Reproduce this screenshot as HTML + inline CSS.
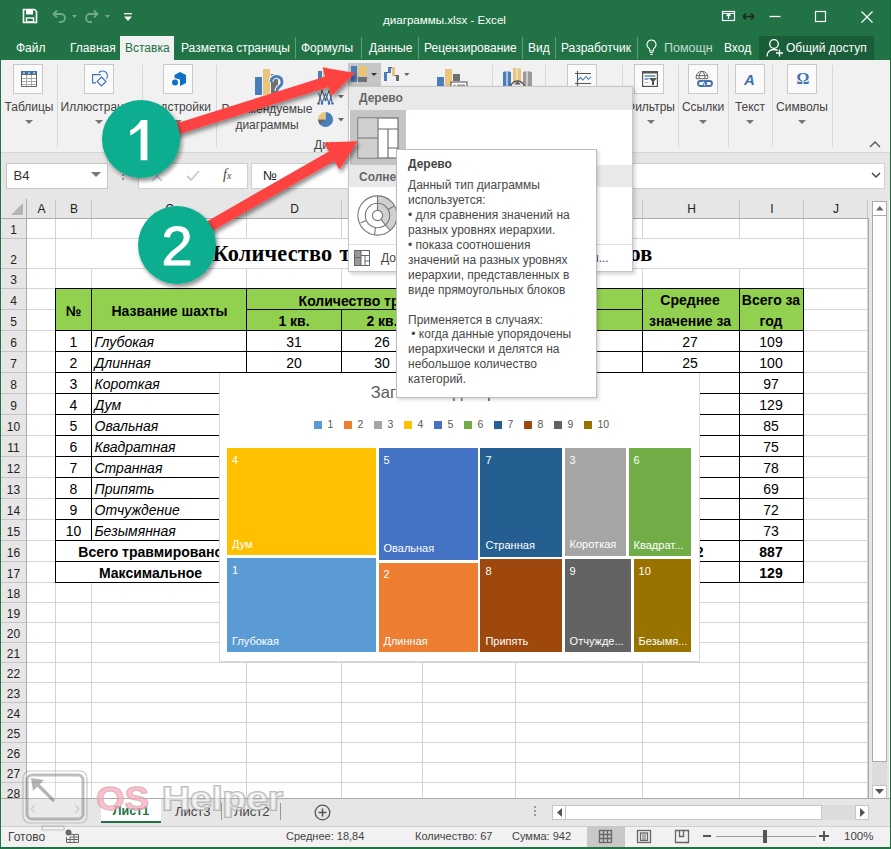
<!DOCTYPE html><html><head><meta charset="utf-8"><style>
*{margin:0;padding:0;box-sizing:border-box}
html,body{width:891px;height:849px;overflow:hidden;background:#fff}
body{position:relative;font-family:"Liberation Sans",sans-serif;color:#000}
.a{position:absolute}
.t{position:absolute;white-space:nowrap;line-height:1}
.ln{position:absolute;background:#d4d4d4}
</style></head><body><div class="a" style="left:0;top:0;width:891px;height:60px;background:#217346"></div>
<svg class="a" style="left:22px;top:8px" width="16" height="16" viewBox="0 0 16 16"><path d="M1.5 1.5h11l2 2v11h-13z" fill="none" stroke="#fff" stroke-width="1.6"/><rect x="4" y="2" width="7" height="4.5" fill="#fff"/><rect x="4.5" y="10" width="7" height="4" fill="none" stroke="#fff" stroke-width="1.4"/></svg>
<svg class="a" style="left:50px;top:8px" width="70" height="16" viewBox="0 0 70 16"><g fill="none" stroke="#6fa98a" stroke-width="1.8"><path d="M4 6h7a4 4 0 0 1 0 8h-2"/><path d="M7 2.5L3.5 6L7 9.5"/><path d="M47 6h-7a4 4 0 0 0 0 8h2"/><path d="M44 2.5L47.5 6L44 9.5"/></g><path d="M22 7h5l-2.5 3z M55 7h5l-2.5 3z" fill="#6fa98a"/></svg>
<svg class="a" style="left:124px;top:13px" width="8" height="9" viewBox="0 0 8 9"><rect x="0" y="0" width="8" height="1.3" fill="#fff"/><path d="M0 3.5h8L4 8z" fill="#fff"/></svg>
<div class="t" style="left:383px;top:14.1px;font-size:11.6px;color:#fff">диаграммы.xlsx - Excel</div>
<svg class="a" style="left:720px;top:9px" width="160" height="16" viewBox="0 0 160 16"><g fill="none" stroke="#fff" stroke-width="1.2"><rect x="2.5" y="2.5" width="12" height="9"/><path d="M8.5 10V5M6.5 7l2-2 2 2M2.5 4.5h12"/><path d="M49.5 7.5h11" stroke-width="1.3"/><rect x="95.5" y="2.5" width="10" height="10"/><path d="M141.5 2.5l11 11M152.5 2.5l-11 11" stroke-width="1.3"/></g><path d="M23 7.5h11M23 7.5l3-3M23 7.5l3 3M34 7.5l-3-3M34 7.5l-3 3" stroke="#222" stroke-width="1.5" fill="none"/></svg>
<div class="a" style="left:120px;top:36px;width:54px;height:25px;background:#f1f1f1"></div>
<div class="t" style="left:16px;top:42px;font-size:12px;color:#fff;width:29px;text-align:justify;text-align-last:justify">Файл</div>
<div class="t" style="left:70px;top:42px;font-size:12px;color:#fff;width:42px;text-align:justify;text-align-last:justify">Главная</div>
<div class="t" style="left:125px;top:42px;font-size:12px;color:#217346;width:44px;text-align:justify;text-align-last:justify">Вставка</div>
<div class="t" style="left:181px;top:42px;font-size:12px;color:#fff;width:106px;text-align:justify;text-align-last:justify">Разметка страницы</div>
<div class="t" style="left:301px;top:42px;font-size:12px;color:#fff;width:53px;text-align:justify;text-align-last:justify">Формулы</div>
<div class="t" style="left:369px;top:42px;font-size:12px;color:#fff;width:42px;text-align:justify;text-align-last:justify">Данные</div>
<div class="t" style="left:424px;top:42px;font-size:12px;color:#fff;width:91px;text-align:justify;text-align-last:justify">Рецензирование</div>
<div class="t" style="left:528px;top:42px;font-size:12px;color:#fff;width:20px;text-align:justify;text-align-last:justify">Вид</div>
<div class="t" style="left:561px;top:42px;font-size:12px;color:#fff;width:70px;text-align:justify;text-align-last:justify">Разработчик</div>
<div class="a" style="left:295px;top:37px;width:1px;height:22px;background:#5e9c7a"></div>
<div class="a" style="left:361px;top:37px;width:1px;height:22px;background:#5e9c7a"></div>
<div class="a" style="left:418px;top:37px;width:1px;height:22px;background:#5e9c7a"></div>
<div class="a" style="left:522px;top:37px;width:1px;height:22px;background:#5e9c7a"></div>
<div class="a" style="left:555px;top:37px;width:1px;height:22px;background:#5e9c7a"></div>
<div class="a" style="left:637px;top:37px;width:1px;height:22px;background:#5e9c7a"></div>
<svg class="a" style="left:646px;top:39px" width="11" height="17" viewBox="0 0 11 17"><path d="M5.5 1a4.5 4.5 0 0 0-2.7 8.1c.6.5.9 1.2.9 1.9V12h3.6v-1c0-.7.3-1.4.9-1.9A4.5 4.5 0 0 0 5.5 1z" fill="none" stroke="#fff" stroke-width="1.1"/><path d="M3.8 13.5h3.4M4.3 15.5h2.4" stroke="#fff" stroke-width="1.1"/></svg>
<div class="t" style="left:664px;top:42px;font-size:12.5px;color:#c5dccf">Помощн</div>
<div class="t" style="left:724px;top:42px;font-size:12px;color:#fff">Вход</div>
<div class="a" style="left:759px;top:36px;width:115px;height:24px;background:#1a5e39"></div>
<svg class="a" style="left:766px;top:38px" width="18" height="20" viewBox="0 0 18 20"><circle cx="8" cy="6" r="4.3" fill="none" stroke="#fff" stroke-width="1.3"/><path d="M1 18.5c0-4.5 3-7 7-7 1.5 0 2.6.3 3.5.9" fill="none" stroke="#fff" stroke-width="1.3"/><path d="M13.5 11.5v7M10 15h7" stroke="#fff" stroke-width="1.3"/></svg>
<div class="t" style="left:786px;top:42px;font-size:12px;color:#fff">Общий доступ</div>
<div class="a" style="left:1px;top:60px;width:889px;height:92px;background:#f1f1f1"></div>
<div class="a" style="left:1px;top:152px;width:889px;height:1px;background:#d5d5d5"></div>
<div class="a" style="left:13px;top:64px;width:30px;height:30px;background:#fafafa;border:1px solid #c9c9c9"></div>
<div class="a" style="left:84px;top:64px;width:30px;height:30px;background:#fafafa;border:1px solid #c9c9c9"></div>
<div class="a" style="left:163px;top:64px;width:30px;height:30px;background:#fafafa;border:1px solid #c9c9c9"></div>
<div class="a" style="left:567px;top:64px;width:30px;height:30px;background:#fafafa;border:1px solid #c9c9c9"></div>
<div class="a" style="left:634px;top:64px;width:30px;height:30px;background:#fafafa;border:1px solid #c9c9c9"></div>
<div class="a" style="left:688px;top:64px;width:30px;height:30px;background:#fafafa;border:1px solid #c9c9c9"></div>
<div class="a" style="left:735px;top:64px;width:30px;height:30px;background:#fafafa;border:1px solid #c9c9c9"></div>
<div class="a" style="left:787px;top:64px;width:30px;height:30px;background:#fafafa;border:1px solid #c9c9c9"></div>
<div class="a" style="left:57px;top:65px;width:1px;height:82px;background:#d8d8d8"></div>
<div class="a" style="left:142px;top:65px;width:1px;height:82px;background:#d8d8d8"></div>
<div class="a" style="left:216px;top:65px;width:1px;height:82px;background:#d8d8d8"></div>
<div class="a" style="left:492px;top:65px;width:1px;height:82px;background:#d8d8d8"></div>
<div class="a" style="left:545px;top:65px;width:1px;height:82px;background:#d8d8d8"></div>
<div class="a" style="left:622px;top:65px;width:1px;height:82px;background:#d8d8d8"></div>
<div class="a" style="left:678px;top:65px;width:1px;height:82px;background:#d8d8d8"></div>
<div class="a" style="left:728px;top:65px;width:1px;height:82px;background:#d8d8d8"></div>
<div class="a" style="left:772px;top:65px;width:1px;height:82px;background:#d8d8d8"></div>
<div class="a" style="left:832px;top:65px;width:1px;height:82px;background:#d8d8d8"></div>
<div class="t" style="left:-31px;width:120px;text-align:center;top:101px;font-size:12px;color:#444">Таблицы</div>
<svg class="a" style="left:25px;top:120px" width="8" height="5"><path d="M0 0h8L4 4z" fill="#777"/></svg>
<div class="t" style="left:39px;width:120px;text-align:center;top:101px;font-size:12px;color:#444">Иллюстрации</div>
<svg class="a" style="left:95px;top:120px" width="8" height="5"><path d="M0 0h8L4 4z" fill="#777"/></svg>
<div class="t" style="left:118px;width:120px;text-align:center;top:101px;font-size:12px;color:#444">Надстройки</div>
<svg class="a" style="left:174px;top:120px" width="8" height="5"><path d="M0 0h8L4 4z" fill="#777"/></svg>
<div class="t" style="left:590.5px;width:120px;text-align:center;top:101px;font-size:12px;color:#444">Фильтры</div>
<svg class="a" style="left:646.5px;top:120px" width="8" height="5"><path d="M0 0h8L4 4z" fill="#777"/></svg>
<div class="t" style="left:643px;width:120px;text-align:center;top:101px;font-size:12px;color:#444">Ссылки</div>
<svg class="a" style="left:699px;top:120px" width="8" height="5"><path d="M0 0h8L4 4z" fill="#777"/></svg>
<div class="t" style="left:690px;width:120px;text-align:center;top:101px;font-size:12px;color:#444">Текст</div>
<svg class="a" style="left:746px;top:120px" width="8" height="5"><path d="M0 0h8L4 4z" fill="#777"/></svg>
<div class="t" style="left:742px;width:120px;text-align:center;top:101px;font-size:12px;color:#444">Символы</div>
<svg class="a" style="left:798px;top:120px" width="8" height="5"><path d="M0 0h8L4 4z" fill="#777"/></svg>
<div class="t" style="left:207px;width:120px;text-align:center;top:102.8px;font-size:12px;color:#444">Рекомендуемые</div>
<div class="t" style="left:207px;width:120px;text-align:center;top:118.5px;font-size:12px;color:#444">диаграммы</div>
<div class="t" style="left:314px;top:139.3px;font-size:12px;color:#444">Диаграммы</div>
<svg class="a" style="left:869px;top:141px" width="12" height="7"><path d="M1 6l5-5 5 5" stroke="#555" stroke-width="1.4" fill="none"/></svg>
<svg class="a" style="left:21px;top:71px" width="16" height="16" viewBox="0 0 16 16"><rect x="0" y="0" width="16" height="4" fill="#3f72af"/><rect x="0.5" y="3.5" width="15" height="12" fill="#fff" stroke="#666"/><path d="M5.5 4v11M10.5 4v11M1 7.5h14M1 10.5h14M1 13.5h14" stroke="#aaa"/><path d="M2 2h2M7 2h2M12 2h2" stroke="#fff"/></svg>
<svg class="a" style="left:90px;top:70px" width="20" height="18" viewBox="0 0 20 18"><g fill="none" stroke="#3c72b4" stroke-width="1.1"><path d="M10.8 4.6H2.6v8.3H6"/><path d="M11.5 7l4.5 4.5-4.5 4.5-4.5-4.5z"/><path d="M8.8 2.8A4.8 4.8 0 1 1 16.4 8.9"/></g></svg>
<svg class="a" style="left:171px;top:71px" width="17" height="16" viewBox="0 0 17 16"><path d="M9 1l6 3v8l-6 3V8.5L3.5 7V4z" fill="#0f6fc6"/><circle cx="4" cy="11.5" r="3" fill="#0f6fc6"/></svg>
<svg class="a" style="left:254px;top:68px" width="30" height="28" viewBox="0 0 30 28"><rect x="1" y="9" width="7" height="18" fill="#4a7ebb"/><rect x="9" y="1" width="7" height="26" fill="#e8c57a"/><rect x="17" y="6" width="7" height="21" fill="#707070"/><path d="M17 14a5.5 5.5 0 1 1 8.5 4.5c-1.8 1.3-2.5 2-2.5 4.5" fill="none" stroke="#f1f1f1" stroke-width="5"/><path d="M17 14a5.5 5.5 0 1 1 8.5 4.5c-1.8 1.3-2.5 2-2.5 4.5" fill="none" stroke="#4a7ebb" stroke-width="2.8"/></svg>
<svg class="a" style="left:317px;top:67px" width="18" height="14" viewBox="0 0 18 14"><rect x="1" y="4" width="4" height="10" fill="#4a7ebb"/><rect x="6" y="0" width="4" height="14" fill="#e8c57a"/><rect x="11" y="6" width="4" height="8" fill="#707070"/></svg>
<svg class="a" style="left:317px;top:89px" width="18" height="16" viewBox="0 0 18 16"><path d="M1.5 14.5L5 1.5L8.5 11L12 1.5L15.5 14.5" fill="none" stroke="#555" stroke-width="1.1"/><path d="M1.5 4L5 14.5L8.5 4.5L12 14.5L15.5 3" fill="none" stroke="#3f72af" stroke-width="1.2"/><circle cx="1.5" cy="14.5" r="1.2" fill="#555"/><circle cx="8.5" cy="11" r="1.1" fill="#555"/><circle cx="15.5" cy="14.5" r="1.2" fill="#3f72af"/><circle cx="5" cy="14.5" r="1.2" fill="#3f72af"/><circle cx="12" cy="14.5" r="1.2" fill="#3f72af"/></svg>
<svg class="a" style="left:338px;top:95px" width="6" height="4"><path d="M0 0h6L3 3.5z" fill="#666"/></svg>
<svg class="a" style="left:317px;top:111px" width="17" height="17" viewBox="0 0 17 17"><path d="M8.5 1A7.5 7.5 0 1 1 2 12.2L8.5 8.5z" fill="#4a7ebb"/><path d="M8.5 1V8.5H1A7.5 7.5 0 0 1 8.5 1z" fill="#e8c57a"/><path d="M1 8.5H8.5L2.6 13.2A7.5 7.5 0 0 1 1 8.5z" fill="#666"/></svg>
<svg class="a" style="left:338px;top:118px" width="6" height="4"><path d="M0 0h6L3 3.5z" fill="#666"/></svg>
<div class="a" style="left:348px;top:63px;width:33px;height:23px;background:#c6c6c6"></div>
<svg class="a" style="left:350px;top:65px" width="30" height="18" viewBox="0 0 30 18"><rect x="1" y="1" width="6" height="16" fill="#4a7ebb"/><rect x="8" y="1" width="9" height="10" fill="#e8c57a"/><rect x="8" y="12" width="9" height="5" fill="#707070"/><path d="M21 8h6l-3 3z" fill="#333"/></svg>
<svg class="a" style="left:383px;top:66px" width="28" height="16" viewBox="0 0 28 16"><rect x="1" y="6" width="3" height="9" fill="#4a7ebb"/><rect x="5" y="1" width="3" height="6" fill="#4a7ebb"/><rect x="9" y="1" width="3" height="9" fill="#e8c57a"/><rect x="13" y="9" width="3" height="6" fill="#6a6a6a"/><path d="M4 6.5h1M8 1.5h1M12 9.5h1" stroke="#444" stroke-width="1"/><path d="M21 7h5.5l-2.75 3z" fill="#666"/></svg>
<svg class="a" style="left:436px;top:68px" width="32" height="20" viewBox="0 0 32 20"><rect x="1" y="9" width="7" height="11" fill="#4a7ebb"/><rect x="9" y="1" width="7" height="19" fill="#e8c57a"/><rect x="17" y="6" width="7" height="7" fill="#707070"/><rect x="15" y="14" width="16" height="7" fill="#fff" stroke="#666" stroke-width="1.2"/><rect x="17.5" y="16.5" width="2" height="3" fill="#999"/><rect x="21" y="16.5" width="8" height="3" fill="#999"/></svg>
<svg class="a" style="left:502px;top:67px" width="32" height="20" viewBox="0 0 32 20"><path d="M1 5l4-1 4 1v15H1z" fill="#4a7ebb"/><path d="M11 1l4 0 4 1v18h-8z" fill="#e8c57a"/><path d="M21 5l4-1 5 1v15h-9z" fill="#9a9a9a"/><path d="M5 4v16M15 1v19M25 4v16" stroke="#f1f1f1" stroke-width="1.2"/><circle cx="15.5" cy="21" r="7" fill="#f1f1f1" stroke="#555" stroke-width="1.3"/><path d="M12 17.5l3.5-3 3.5 3z" fill="#555"/></svg>
<svg class="a" style="left:574px;top:70px" width="18" height="17" viewBox="0 0 18 17"><path d="M3.5 1V17M1 3.5H17M1 13.5H17" stroke="#555" stroke-width="1.1"/><path d="M4 10L6.5 7.5L9 10L12 6.5L14.5 9.5L17 6.5" fill="none" stroke="#4a7ebb" stroke-width="1.1"/></svg>
<svg class="a" style="left:642px;top:71px" width="16" height="16" viewBox="0 0 16 16"><rect x="0.6" y="0.6" width="14.8" height="14.8" fill="#fff" stroke="#555" stroke-width="1.2"/><rect x="0" y="0" width="16" height="2.5" fill="#555"/><path d="M2.5 5h11" stroke="#3f72af" stroke-width="1.3"/><path d="M2.5 8h4" stroke="#3f72af" stroke-width="1.3"/><path d="M2.5 11.5h4" stroke="#9bb8d8" stroke-width="1"/><path d="M7 7h8l-3 3.5V14h-2v-3.5z" fill="#555"/></svg>
<svg class="a" style="left:695px;top:70px" width="20" height="19" viewBox="0 0 20 19"><g fill="none" stroke="#666" stroke-width="1"><path d="M1.3 8.7A5.9 5.9 0 1 1 12.7 8.7Z"/><path d="M1.5 5.6H12.5M4.2 8.7V5.6Q5 2 7 1.3Q9 2 9.8 5.6V8.7"/></g><rect x="3" y="11" width="8" height="5" rx="2.5" fill="none" stroke="#3f72af" stroke-width="1.9"/><rect x="9" y="11" width="8" height="5" rx="2.5" fill="none" stroke="#3f72af" stroke-width="1.9"/><path d="M8.2 11.2L10.2 15.8" stroke="#fafafa" stroke-width="0.9"/></svg>
<div class="t" style="left:744px;top:72px;font-size:15px;font-weight:bold;font-style:italic;color:#3f72af">A</div>
<div class="t" style="left:796.5px;top:71px;font-family:'Liberation Serif';font-size:16px;font-weight:bold;color:#3f72af">&#937;</div>
<div class="a" style="left:1px;top:153px;width:889px;height:46px;background:#e6e6e6"></div>
<div class="a" style="left:6px;top:163px;width:102px;height:26px;background:#fff;border:1px solid #c6c6c6"></div>
<div class="t" style="left:13.5px;top:169px;font-size:13px;color:#333">B4</div>
<svg class="a" style="left:91px;top:172px" width="10" height="6"><path d="M0 0h10L5 5z" fill="#777"/></svg>
<div class="a" style="left:122px;top:170px;width:2px;height:2px;background:#999;box-shadow:0 4px 0 #999,0 8px 0 #999"></div>
<div class="a" style="left:138px;top:163px;width:110px;height:26px;background:#fff;border:1px solid #d0d0d0"></div>
<svg class="a" style="left:150px;top:168px" width="90" height="16" viewBox="0 0 90 16"><path d="M2 3l10 10M12 3L2 13" stroke="#c8c8c8" stroke-width="1.5"/><path d="M37 8l4 4 8-9" stroke="#c8c8c8" stroke-width="1.8" fill="none"/></svg>
<div class="t" style="left:223px;top:168px;font-family:'Liberation Serif';font-style:italic;font-size:14px;color:#444">f<span style="font-size:10px">x</span></div>
<div class="a" style="left:251px;top:163px;width:634px;height:26px;background:#fff;border:1px solid #d0d0d0"></div>
<div class="t" style="left:263px;top:169px;font-size:13px;color:#222">№</div>
<svg class="a" style="left:871px;top:172px" width="10" height="7"><path d="M1 1l4 4 4-4" stroke="#444" stroke-width="1.5" fill="none"/></svg>
<div class="a" style="left:1px;top:199px;width:867px;height:19px;background:#e6e6e6"></div>
<div class="a" style="left:1px;top:218px;width:26px;height:581px;background:#e6e6e6"></div>
<svg class="a" style="left:11px;top:203px" width="12" height="12"><path d="M12 0V12H0z" fill="#b4b4b4"/></svg>
<div class="a" style="left:55px;top:200px;width:1px;height:18px;background:#c4c4c4"></div>
<div class="t" style="left:27px;width:29px;text-align:center;top:203px;font-size:12px;color:#222">A</div>
<div class="a" style="left:91px;top:200px;width:1px;height:18px;background:#c4c4c4"></div>
<div class="t" style="left:56px;width:36px;text-align:center;top:203px;font-size:12px;color:#222">B</div>
<div class="a" style="left:246px;top:200px;width:1px;height:18px;background:#c4c4c4"></div>
<div class="t" style="left:92px;width:155px;text-align:center;top:203px;font-size:12px;color:#222">C</div>
<div class="a" style="left:341px;top:200px;width:1px;height:18px;background:#c4c4c4"></div>
<div class="t" style="left:247px;width:95px;text-align:center;top:203px;font-size:12px;color:#222">D</div>
<div class="a" style="left:422px;top:200px;width:1px;height:18px;background:#c4c4c4"></div>
<div class="t" style="left:342px;width:81px;text-align:center;top:203px;font-size:12px;color:#222">E</div>
<div class="a" style="left:515px;top:200px;width:1px;height:18px;background:#c4c4c4"></div>
<div class="t" style="left:423px;width:93px;text-align:center;top:203px;font-size:12px;color:#222">F</div>
<div class="a" style="left:642px;top:200px;width:1px;height:18px;background:#c4c4c4"></div>
<div class="t" style="left:516px;width:127px;text-align:center;top:203px;font-size:12px;color:#222">G</div>
<div class="a" style="left:739px;top:200px;width:1px;height:18px;background:#c4c4c4"></div>
<div class="t" style="left:643px;width:97px;text-align:center;top:203px;font-size:12px;color:#222">H</div>
<div class="a" style="left:803px;top:200px;width:1px;height:18px;background:#c4c4c4"></div>
<div class="t" style="left:740px;width:64px;text-align:center;top:203px;font-size:12px;color:#222">I</div>
<div class="a" style="left:867px;top:200px;width:1px;height:18px;background:#c4c4c4"></div>
<div class="t" style="left:804px;width:64px;text-align:center;top:203px;font-size:12px;color:#222">J</div>
<div class="a" style="left:1px;top:218px;width:867px;height:1px;background:#ababab"></div>
<div class="a" style="left:26px;top:199px;width:1px;height:600px;background:#ababab"></div>
<div class="a" style="left:1px;top:238px;width:25px;height:1px;background:#c4c4c4"></div>
<div class="t" style="left:1px;width:25px;text-align:center;top:224px;font-size:12px;color:#222">1</div>
<div class="a" style="left:1px;top:268px;width:25px;height:1px;background:#c4c4c4"></div>
<div class="t" style="left:1px;width:25px;text-align:center;top:254px;font-size:12px;color:#222">2</div>
<div class="a" style="left:1px;top:288px;width:25px;height:1px;background:#c4c4c4"></div>
<div class="t" style="left:1px;width:25px;text-align:center;top:274px;font-size:12px;color:#222">3</div>
<div class="a" style="left:1px;top:309px;width:25px;height:1px;background:#c4c4c4"></div>
<div class="t" style="left:1px;width:25px;text-align:center;top:295px;font-size:12px;color:#222">4</div>
<div class="a" style="left:1px;top:330px;width:25px;height:1px;background:#c4c4c4"></div>
<div class="t" style="left:1px;width:25px;text-align:center;top:316px;font-size:12px;color:#222">5</div>
<div class="a" style="left:1px;top:351px;width:25px;height:1px;background:#c4c4c4"></div>
<div class="t" style="left:1px;width:25px;text-align:center;top:337px;font-size:12px;color:#222">6</div>
<div class="a" style="left:1px;top:372px;width:25px;height:1px;background:#c4c4c4"></div>
<div class="t" style="left:1px;width:25px;text-align:center;top:358px;font-size:12px;color:#222">7</div>
<div class="a" style="left:1px;top:393px;width:25px;height:1px;background:#c4c4c4"></div>
<div class="t" style="left:1px;width:25px;text-align:center;top:379px;font-size:12px;color:#222">8</div>
<div class="a" style="left:1px;top:414px;width:25px;height:1px;background:#c4c4c4"></div>
<div class="t" style="left:1px;width:25px;text-align:center;top:400px;font-size:12px;color:#222">9</div>
<div class="a" style="left:1px;top:435px;width:25px;height:1px;background:#c4c4c4"></div>
<div class="t" style="left:1px;width:25px;text-align:center;top:421px;font-size:12px;color:#222">10</div>
<div class="a" style="left:1px;top:456px;width:25px;height:1px;background:#c4c4c4"></div>
<div class="t" style="left:1px;width:25px;text-align:center;top:442px;font-size:12px;color:#222">11</div>
<div class="a" style="left:1px;top:477px;width:25px;height:1px;background:#c4c4c4"></div>
<div class="t" style="left:1px;width:25px;text-align:center;top:463px;font-size:12px;color:#222">12</div>
<div class="a" style="left:1px;top:498px;width:25px;height:1px;background:#c4c4c4"></div>
<div class="t" style="left:1px;width:25px;text-align:center;top:484px;font-size:12px;color:#222">13</div>
<div class="a" style="left:1px;top:519px;width:25px;height:1px;background:#c4c4c4"></div>
<div class="t" style="left:1px;width:25px;text-align:center;top:505px;font-size:12px;color:#222">14</div>
<div class="a" style="left:1px;top:540px;width:25px;height:1px;background:#c4c4c4"></div>
<div class="t" style="left:1px;width:25px;text-align:center;top:526px;font-size:12px;color:#222">15</div>
<div class="a" style="left:1px;top:561px;width:25px;height:1px;background:#c4c4c4"></div>
<div class="t" style="left:1px;width:25px;text-align:center;top:547px;font-size:12px;color:#222">16</div>
<div class="a" style="left:1px;top:582px;width:25px;height:1px;background:#c4c4c4"></div>
<div class="t" style="left:1px;width:25px;text-align:center;top:568px;font-size:12px;color:#222">17</div>
<div class="a" style="left:1px;top:602px;width:25px;height:1px;background:#c4c4c4"></div>
<div class="t" style="left:1px;width:25px;text-align:center;top:588px;font-size:12px;color:#222">18</div>
<div class="a" style="left:1px;top:622px;width:25px;height:1px;background:#c4c4c4"></div>
<div class="t" style="left:1px;width:25px;text-align:center;top:608px;font-size:12px;color:#222">19</div>
<div class="a" style="left:1px;top:642px;width:25px;height:1px;background:#c4c4c4"></div>
<div class="t" style="left:1px;width:25px;text-align:center;top:628px;font-size:12px;color:#222">20</div>
<div class="a" style="left:1px;top:662px;width:25px;height:1px;background:#c4c4c4"></div>
<div class="t" style="left:1px;width:25px;text-align:center;top:648px;font-size:12px;color:#222">21</div>
<div class="a" style="left:1px;top:682px;width:25px;height:1px;background:#c4c4c4"></div>
<div class="t" style="left:1px;width:25px;text-align:center;top:668px;font-size:12px;color:#222">22</div>
<div class="a" style="left:1px;top:702px;width:25px;height:1px;background:#c4c4c4"></div>
<div class="t" style="left:1px;width:25px;text-align:center;top:688px;font-size:12px;color:#222">23</div>
<div class="a" style="left:1px;top:722px;width:25px;height:1px;background:#c4c4c4"></div>
<div class="t" style="left:1px;width:25px;text-align:center;top:708px;font-size:12px;color:#222">24</div>
<div class="a" style="left:1px;top:742px;width:25px;height:1px;background:#c4c4c4"></div>
<div class="t" style="left:1px;width:25px;text-align:center;top:728px;font-size:12px;color:#222">25</div>
<div class="a" style="left:1px;top:762px;width:25px;height:1px;background:#c4c4c4"></div>
<div class="t" style="left:1px;width:25px;text-align:center;top:748px;font-size:12px;color:#222">26</div>
<div class="a" style="left:1px;top:782px;width:25px;height:1px;background:#c4c4c4"></div>
<div class="t" style="left:1px;width:25px;text-align:center;top:768px;font-size:12px;color:#222">27</div>
<div class="a" style="left:1px;top:802px;width:25px;height:1px;background:#c4c4c4"></div>
<div class="t" style="left:1px;width:25px;text-align:center;top:788px;font-size:12px;color:#222">28</div>
<div class="ln" style="left:55px;top:219px;width:1px;height:580px"></div>
<div class="ln" style="left:91px;top:219px;width:1px;height:19px"></div>
<div class="ln" style="left:91px;top:269px;width:1px;height:530px"></div>
<div class="ln" style="left:246px;top:219px;width:1px;height:19px"></div>
<div class="ln" style="left:246px;top:269px;width:1px;height:530px"></div>
<div class="ln" style="left:341px;top:219px;width:1px;height:19px"></div>
<div class="ln" style="left:341px;top:269px;width:1px;height:530px"></div>
<div class="ln" style="left:422px;top:219px;width:1px;height:19px"></div>
<div class="ln" style="left:422px;top:269px;width:1px;height:530px"></div>
<div class="ln" style="left:515px;top:219px;width:1px;height:19px"></div>
<div class="ln" style="left:515px;top:269px;width:1px;height:530px"></div>
<div class="ln" style="left:642px;top:219px;width:1px;height:19px"></div>
<div class="ln" style="left:642px;top:269px;width:1px;height:530px"></div>
<div class="ln" style="left:739px;top:219px;width:1px;height:19px"></div>
<div class="ln" style="left:739px;top:269px;width:1px;height:530px"></div>
<div class="ln" style="left:803px;top:219px;width:1px;height:580px"></div>
<div class="ln" style="left:867px;top:219px;width:1px;height:580px"></div>
<div class="ln" style="left:27px;top:238px;width:840px;height:1px"></div>
<div class="ln" style="left:27px;top:268px;width:840px;height:1px"></div>
<div class="ln" style="left:27px;top:288px;width:840px;height:1px"></div>
<div class="ln" style="left:27px;top:309px;width:840px;height:1px"></div>
<div class="ln" style="left:27px;top:330px;width:840px;height:1px"></div>
<div class="ln" style="left:27px;top:351px;width:840px;height:1px"></div>
<div class="ln" style="left:27px;top:372px;width:840px;height:1px"></div>
<div class="ln" style="left:27px;top:393px;width:840px;height:1px"></div>
<div class="ln" style="left:27px;top:414px;width:840px;height:1px"></div>
<div class="ln" style="left:27px;top:435px;width:840px;height:1px"></div>
<div class="ln" style="left:27px;top:456px;width:840px;height:1px"></div>
<div class="ln" style="left:27px;top:477px;width:840px;height:1px"></div>
<div class="ln" style="left:27px;top:498px;width:840px;height:1px"></div>
<div class="ln" style="left:27px;top:519px;width:840px;height:1px"></div>
<div class="ln" style="left:27px;top:540px;width:840px;height:1px"></div>
<div class="ln" style="left:27px;top:561px;width:840px;height:1px"></div>
<div class="ln" style="left:27px;top:582px;width:840px;height:1px"></div>
<div class="ln" style="left:27px;top:602px;width:840px;height:1px"></div>
<div class="ln" style="left:27px;top:622px;width:840px;height:1px"></div>
<div class="ln" style="left:27px;top:642px;width:840px;height:1px"></div>
<div class="ln" style="left:27px;top:662px;width:840px;height:1px"></div>
<div class="ln" style="left:27px;top:682px;width:840px;height:1px"></div>
<div class="ln" style="left:27px;top:702px;width:840px;height:1px"></div>
<div class="ln" style="left:27px;top:722px;width:840px;height:1px"></div>
<div class="ln" style="left:27px;top:742px;width:840px;height:1px"></div>
<div class="ln" style="left:27px;top:762px;width:840px;height:1px"></div>
<div class="ln" style="left:27px;top:782px;width:840px;height:1px"></div>
<div class="ln" style="left:27px;top:802px;width:840px;height:1px"></div>
<div class="a" style="left:55px;top:288px;width:749px;height:42px;background:#92d050"></div>
<div class="a" style="left:55px;top:330px;width:749px;height:252px;background:#fff"></div>
<div class="a" style="left:55px;top:288px;width:749px;height:1px;background:#000"></div>
<div class="a" style="left:55px;top:330px;width:749px;height:1px;background:#000"></div>
<div class="a" style="left:55px;top:351px;width:749px;height:1px;background:#000"></div>
<div class="a" style="left:55px;top:372px;width:749px;height:1px;background:#000"></div>
<div class="a" style="left:55px;top:393px;width:749px;height:1px;background:#000"></div>
<div class="a" style="left:55px;top:414px;width:749px;height:1px;background:#000"></div>
<div class="a" style="left:55px;top:435px;width:749px;height:1px;background:#000"></div>
<div class="a" style="left:55px;top:456px;width:749px;height:1px;background:#000"></div>
<div class="a" style="left:55px;top:477px;width:749px;height:1px;background:#000"></div>
<div class="a" style="left:55px;top:498px;width:749px;height:1px;background:#000"></div>
<div class="a" style="left:55px;top:519px;width:749px;height:1px;background:#000"></div>
<div class="a" style="left:55px;top:540px;width:749px;height:1px;background:#000"></div>
<div class="a" style="left:55px;top:561px;width:749px;height:1px;background:#000"></div>
<div class="a" style="left:55px;top:582px;width:749px;height:1px;background:#000"></div>
<div class="a" style="left:246px;top:309px;width:397px;height:1px;background:#000"></div>
<div class="a" style="left:55px;top:288px;width:1px;height:295px;background:#000"></div>
<div class="a" style="left:803px;top:288px;width:1px;height:295px;background:#000"></div>
<div class="a" style="left:91px;top:288px;width:1px;height:253px;background:#000"></div>
<div class="a" style="left:246px;top:288px;width:1px;height:253px;background:#000"></div>
<div class="a" style="left:341px;top:309px;width:1px;height:232px;background:#000"></div>
<div class="a" style="left:422px;top:309px;width:1px;height:232px;background:#000"></div>
<div class="a" style="left:515px;top:309px;width:1px;height:232px;background:#000"></div>
<div class="a" style="left:642px;top:288px;width:1px;height:295px;background:#000"></div>
<div class="a" style="left:739px;top:288px;width:1px;height:295px;background:#000"></div>
<div class="t" style="left:-26.5px;width:200px;text-align:center;top:303.7px;font-size:14px;font-weight:bold;font-style:normal">№</div>
<div class="t" style="left:69.5px;width:200px;text-align:center;top:303.7px;font-size:14px;font-weight:bold;font-style:normal">Название шахты</div>
<div class="t" style="left:298.6px;top:293.5px;font-size:14px;font-weight:bold;font-style:normal">Количество травмированных горняков</div>
<div class="t" style="left:194px;width:200px;text-align:center;top:313.6px;font-size:14px;font-weight:bold;font-style:normal">1 кв.</div>
<div class="t" style="left:282px;width:200px;text-align:center;top:313.6px;font-size:14px;font-weight:bold;font-style:normal">2 кв.</div>
<div class="t" style="left:369px;width:200px;text-align:center;top:313.6px;font-size:14px;font-weight:bold;font-style:normal">3 кв.</div>
<div class="t" style="left:479px;width:200px;text-align:center;top:313.6px;font-size:14px;font-weight:bold;font-style:normal">4 кв.</div>
<div class="t" style="left:590px;width:200px;text-align:center;top:293.0px;font-size:14px;font-weight:bold;font-style:normal">Среднее</div>
<div class="t" style="left:590px;width:200px;text-align:center;top:313.9px;font-size:14px;font-weight:bold;font-style:normal">значение за</div>
<div class="t" style="left:671px;width:200px;text-align:center;top:293.0px;font-size:14px;font-weight:bold;font-style:normal">Всего за</div>
<div class="t" style="left:671px;width:200px;text-align:center;top:313.9px;font-size:14px;font-weight:bold;font-style:normal">год</div>
<div class="t" style="left:-26.5px;width:200px;text-align:center;top:335.2px;font-size:14px;font-weight:normal;font-style:normal">1</div>
<div class="t" style="left:94.5px;top:335.2px;font-size:14px;font-weight:normal;font-style:italic">Глубокая</div>
<div class="t" style="left:194px;width:200px;text-align:center;top:335.2px;font-size:14px;font-weight:normal;font-style:normal">31</div>
<div class="t" style="left:282px;width:200px;text-align:center;top:335.2px;font-size:14px;font-weight:normal;font-style:normal">26</div>
<div class="t" style="left:590px;width:200px;text-align:center;top:335.2px;font-size:14px;font-weight:normal;font-style:normal">27</div>
<div class="t" style="left:671px;width:200px;text-align:center;top:335.2px;font-size:14px;font-weight:normal;font-style:normal">109</div>
<div class="t" style="left:-26.5px;width:200px;text-align:center;top:356.2px;font-size:14px;font-weight:normal;font-style:normal">2</div>
<div class="t" style="left:94.5px;top:356.2px;font-size:14px;font-weight:normal;font-style:italic">Длинная</div>
<div class="t" style="left:194px;width:200px;text-align:center;top:356.2px;font-size:14px;font-weight:normal;font-style:normal">20</div>
<div class="t" style="left:282px;width:200px;text-align:center;top:356.2px;font-size:14px;font-weight:normal;font-style:normal">30</div>
<div class="t" style="left:590px;width:200px;text-align:center;top:356.2px;font-size:14px;font-weight:normal;font-style:normal">25</div>
<div class="t" style="left:671px;width:200px;text-align:center;top:356.2px;font-size:14px;font-weight:normal;font-style:normal">100</div>
<div class="t" style="left:-26.5px;width:200px;text-align:center;top:377.2px;font-size:14px;font-weight:normal;font-style:normal">3</div>
<div class="t" style="left:94.5px;top:377.2px;font-size:14px;font-weight:normal;font-style:italic">Короткая</div>
<div class="t" style="left:671px;width:200px;text-align:center;top:377.2px;font-size:14px;font-weight:normal;font-style:normal">97</div>
<div class="t" style="left:-26.5px;width:200px;text-align:center;top:398.2px;font-size:14px;font-weight:normal;font-style:normal">4</div>
<div class="t" style="left:94.5px;top:398.2px;font-size:14px;font-weight:normal;font-style:italic">Дум</div>
<div class="t" style="left:671px;width:200px;text-align:center;top:398.2px;font-size:14px;font-weight:normal;font-style:normal">129</div>
<div class="t" style="left:-26.5px;width:200px;text-align:center;top:419.2px;font-size:14px;font-weight:normal;font-style:normal">5</div>
<div class="t" style="left:94.5px;top:419.2px;font-size:14px;font-weight:normal;font-style:italic">Овальная</div>
<div class="t" style="left:671px;width:200px;text-align:center;top:419.2px;font-size:14px;font-weight:normal;font-style:normal">85</div>
<div class="t" style="left:-26.5px;width:200px;text-align:center;top:440.2px;font-size:14px;font-weight:normal;font-style:normal">6</div>
<div class="t" style="left:94.5px;top:440.2px;font-size:14px;font-weight:normal;font-style:italic">Квадратная</div>
<div class="t" style="left:671px;width:200px;text-align:center;top:440.2px;font-size:14px;font-weight:normal;font-style:normal">75</div>
<div class="t" style="left:-26.5px;width:200px;text-align:center;top:461.2px;font-size:14px;font-weight:normal;font-style:normal">7</div>
<div class="t" style="left:94.5px;top:461.2px;font-size:14px;font-weight:normal;font-style:italic">Странная</div>
<div class="t" style="left:671px;width:200px;text-align:center;top:461.2px;font-size:14px;font-weight:normal;font-style:normal">78</div>
<div class="t" style="left:-26.5px;width:200px;text-align:center;top:482.2px;font-size:14px;font-weight:normal;font-style:normal">8</div>
<div class="t" style="left:94.5px;top:482.2px;font-size:14px;font-weight:normal;font-style:italic">Припять</div>
<div class="t" style="left:671px;width:200px;text-align:center;top:482.2px;font-size:14px;font-weight:normal;font-style:normal">69</div>
<div class="t" style="left:-26.5px;width:200px;text-align:center;top:503.2px;font-size:14px;font-weight:normal;font-style:normal">9</div>
<div class="t" style="left:94.5px;top:503.2px;font-size:14px;font-weight:normal;font-style:italic">Отчуждение</div>
<div class="t" style="left:671px;width:200px;text-align:center;top:503.2px;font-size:14px;font-weight:normal;font-style:normal">72</div>
<div class="t" style="left:-26.5px;width:200px;text-align:center;top:524.2px;font-size:14px;font-weight:normal;font-style:normal">10</div>
<div class="t" style="left:94.5px;top:524.2px;font-size:14px;font-weight:normal;font-style:italic">Безымянная</div>
<div class="t" style="left:671px;width:200px;text-align:center;top:524.2px;font-size:14px;font-weight:normal;font-style:normal">73</div>
<div class="t" style="left:78.3px;top:545.2px;font-size:14px;font-weight:bold;font-style:normal">Всего травмировано</div>
<div class="t" style="left:590px;width:200px;text-align:center;top:545.2px;font-size:14px;font-weight:bold;font-style:normal">88,2</div>
<div class="t" style="left:671px;width:200px;text-align:center;top:545.2px;font-size:14px;font-weight:bold;font-style:normal">887</div>
<div class="t" style="left:99px;top:566.2px;font-size:14px;font-weight:bold;font-style:normal">Максимальное</div>
<div class="t" style="left:671px;width:200px;text-align:center;top:566.2px;font-size:14px;font-weight:bold;font-style:normal">129</div>
<div class="t" style="left:212.5px;top:242.6px;font-family:'Liberation Serif';font-size:22.3px;font-weight:bold;letter-spacing:0.2px;word-spacing:1.3px">Количество травмированных сотрудников</div>
<div class="a" style="left:219px;top:373px;width:481px;height:289px;background:#fff;border:1px solid #d9d9d9;border-top:none"></div>
<div class="t" style="left:370.8px;top:383.5px;font-size:16.5px;color:#595959">Заголовок диаграммы</div>
<div class="a" style="left:313.5px;top:421px;width:8px;height:8px;background:#5b9bd5"></div>
<div class="t" style="left:327.5px;top:419.3px;font-size:10.5px;color:#595959">1</div>
<div class="a" style="left:343.5px;top:421px;width:8px;height:8px;background:#ed7d31"></div>
<div class="t" style="left:357.5px;top:419.3px;font-size:10.5px;color:#595959">2</div>
<div class="a" style="left:373.5px;top:421px;width:8px;height:8px;background:#a5a5a5"></div>
<div class="t" style="left:387.5px;top:419.3px;font-size:10.5px;color:#595959">3</div>
<div class="a" style="left:403.5px;top:421px;width:8px;height:8px;background:#ffc000"></div>
<div class="t" style="left:417.5px;top:419.3px;font-size:10.5px;color:#595959">4</div>
<div class="a" style="left:433.5px;top:421px;width:8px;height:8px;background:#4472c4"></div>
<div class="t" style="left:447.5px;top:419.3px;font-size:10.5px;color:#595959">5</div>
<div class="a" style="left:463.5px;top:421px;width:8px;height:8px;background:#70ad47"></div>
<div class="t" style="left:477.5px;top:419.3px;font-size:10.5px;color:#595959">6</div>
<div class="a" style="left:493.5px;top:421px;width:8px;height:8px;background:#255e91"></div>
<div class="t" style="left:507.5px;top:419.3px;font-size:10.5px;color:#595959">7</div>
<div class="a" style="left:523.5px;top:421px;width:8px;height:8px;background:#9e480e"></div>
<div class="t" style="left:537.5px;top:419.3px;font-size:10.5px;color:#595959">8</div>
<div class="a" style="left:553.5px;top:421px;width:8px;height:8px;background:#636363"></div>
<div class="t" style="left:567.5px;top:419.3px;font-size:10.5px;color:#595959">9</div>
<div class="a" style="left:583.5px;top:421px;width:8px;height:8px;background:#997300"></div>
<div class="t" style="left:597.5px;top:419.3px;font-size:10.5px;color:#595959">10</div>
<div class="a" style="left:227px;top:447.6px;width:149.2px;height:107.4px;background:#ffc000"></div>
<div class="t" style="left:232px;top:454.5px;font-size:11px;color:#fff">4</div>
<div class="t" style="left:232px;top:538.5px;font-size:11px;color:#fff">Дум</div>
<div class="a" style="left:227px;top:557.7px;width:149.2px;height:94.6px;background:#5b9bd5"></div>
<div class="t" style="left:232px;top:564.6px;font-size:11px;color:#fff">1</div>
<div class="t" style="left:232px;top:635.8px;font-size:11px;color:#fff">Глубокая</div>
<div class="a" style="left:378.5px;top:447.6px;width:99.7px;height:112.3px;background:#4472c4"></div>
<div class="t" style="left:383.5px;top:454.5px;font-size:11px;color:#fff">5</div>
<div class="t" style="left:383.5px;top:543.4px;font-size:11px;color:#fff">Овальная</div>
<div class="a" style="left:378.5px;top:562.5px;width:99.7px;height:89.8px;background:#ed7d31"></div>
<div class="t" style="left:383.5px;top:569.4px;font-size:11px;color:#fff">2</div>
<div class="t" style="left:383.5px;top:635.8px;font-size:11px;color:#fff">Длинная</div>
<div class="a" style="left:480.4px;top:447.6px;width:81.7px;height:109.0px;background:#255e91"></div>
<div class="t" style="left:485.4px;top:454.5px;font-size:11px;color:#fff">7</div>
<div class="t" style="left:485.4px;top:540.1px;font-size:11px;color:#fff">Странная</div>
<div class="a" style="left:480.4px;top:559.3px;width:81.7px;height:93.0px;background:#9e480e"></div>
<div class="t" style="left:485.4px;top:566.2px;font-size:11px;color:#fff">8</div>
<div class="t" style="left:485.4px;top:635.8px;font-size:11px;color:#fff">Припять</div>
<div class="a" style="left:564.6px;top:447.6px;width:61.6px;height:108.2px;background:#a5a5a5"></div>
<div class="t" style="left:569.6px;top:454.5px;font-size:11px;color:#fff">3</div>
<div class="t" style="left:569.6px;top:539.3px;font-size:11px;color:#fff">Короткая</div>
<div class="a" style="left:628.6px;top:447.6px;width:62.0px;height:108.4px;background:#70ad47"></div>
<div class="t" style="left:633.6px;top:454.5px;font-size:11px;color:#fff">6</div>
<div class="t" style="left:633.6px;top:539.5px;font-size:11px;color:#fff">Квадрат...</div>
<div class="a" style="left:564.6px;top:558.6px;width:66.3px;height:93.7px;background:#636363"></div>
<div class="t" style="left:569.6px;top:565.5px;font-size:11px;color:#fff">9</div>
<div class="t" style="left:569.6px;top:635.8px;font-size:11px;color:#fff">Отчужде...</div>
<div class="a" style="left:633.6px;top:558.6px;width:57.0px;height:93.7px;background:#997300"></div>
<div class="t" style="left:638.6px;top:565.5px;font-size:11px;color:#fff">10</div>
<div class="t" style="left:638.6px;top:635.8px;font-size:11px;color:#fff">Безымя...</div>
<div class="a" style="left:348px;top:86px;width:285px;height:186px;background:#fff;border:1px solid #c6c6c6;box-shadow:2px 2px 4px rgba(0,0,0,0.18)"></div>
<div class="a" style="left:349px;top:87px;width:283px;height:23px;background:#e9e9e9"></div>
<div class="t" style="left:359px;top:92.4px;font-size:12px;font-weight:bold;color:#666">Дерево</div>
<div class="a" style="left:350px;top:110px;width:56px;height:55px;background:#c5c5c5"></div>
<svg class="a" style="left:357px;top:117px" width="42" height="42" viewBox="0 0 42 42"><rect x="1" y="1" width="40" height="40" fill="#fff" stroke="#666" stroke-width="1.1"/><rect x="1.5" y="1.5" width="19" height="19" fill="#d0d0d0"/><rect x="1.5" y="21" width="19" height="19.5" fill="#d0d0d0"/><path d="M21 1v40M1 21h20M21 12h20M31 12v29M31 31h10" stroke="#666" stroke-width="1.1" fill="none"/></svg>
<div class="a" style="left:349px;top:165px;width:283px;height:22px;background:#e9e9e9"></div>
<div class="t" style="left:359px;top:170.8px;font-size:12px;font-weight:bold;color:#666">Солнечные лучи</div>
<svg class="a" style="left:355px;top:193px" width="45" height="45" viewBox="-22.5 -22.5 45 45"><path d="M0 -19.6A19.6 19.6 0 0 1 17 -9.8L10.6 -6.1A12.2 12.2 0 0 0 0 -12.2z" fill="#d0d0d0"/><path d="M17 -9.8A19.6 19.6 0 0 1 12.6 15L7.8 9.3A12.2 12.2 0 0 0 10.6 -6.1z" fill="#d0d0d0"/><path d="M0 -12.2A12.2 12.2 0 0 1 7.8 9.3L3.3 3.9A5.1 5.1 0 0 0 0 -5.1z" fill="#d0d0d0"/><g fill="none" stroke="#777" stroke-width="1.1"><circle r="19.6"/><circle r="12.2"/><circle r="5.1"/><path d="M0 -19.6V-5.1M10.6 -6.1L17 -9.8M3.3 3.9L12.6 15M-3 19.4L-2 12M-17 7.5L-11.2 4.9"/></g></svg>
<div class="a" style="left:349px;top:244px;width:283px;height:1px;background:#e1e1e1"></div>
<svg class="a" style="left:354px;top:250px" width="16" height="16" viewBox="0 0 16 16"><rect x="0.5" y="0.5" width="15" height="15" fill="#fff" stroke="#666"/><rect x="1" y="1" width="6" height="14" fill="#999"/><path d="M7 0.5v15M1 7.5h6M7 5.5h8.5M11 5.5v10M11 11h4.5" stroke="#666" fill="none"/></svg>
<div class="t" style="left:381px;top:252.0px;font-size:12px;color:#444"><u>Д</u>ополнительные диаграммы...</div>
<div class="t" style="left:590px;top:252.0px;font-size:12px;color:#444">ы...</div>
<div class="a" style="left:396px;top:149px;width:201px;height:249px;background:#fff;border:1px solid #bcbcbc;box-shadow:2px 2px 3px rgba(0,0,0,0.15)"></div>
<div class="t" style="left:408px;top:158.0px;font-size:12px;font-weight:bold;color:#444">Дерево</div>
<div class="t" style="left:408px;top:179.2px;font-size:12px;color:#484848;white-space:pre">Данный тип диаграммы</div>
<div class="t" style="left:408px;top:194.2px;font-size:12px;color:#484848;white-space:pre">используется:</div>
<div class="t" style="left:408px;top:209.1px;font-size:12px;color:#484848;white-space:pre">• для сравнения значений на</div>
<div class="t" style="left:408px;top:224.0px;font-size:12px;color:#484848;white-space:pre">разных уровнях иерархии.</div>
<div class="t" style="left:408px;top:238.9px;font-size:12px;color:#484848;white-space:pre">• показа соотношения</div>
<div class="t" style="left:408px;top:253.8px;font-size:12px;color:#484848;white-space:pre">значений на разных уровнях</div>
<div class="t" style="left:408px;top:268.8px;font-size:12px;color:#484848;white-space:pre">иерархии, представленных в</div>
<div class="t" style="left:408px;top:283.7px;font-size:12px;color:#484848;white-space:pre">виде прямоугольных блоков</div>
<div class="t" style="left:408px;top:313.5px;font-size:12px;color:#484848;white-space:pre">Применяется в случаях:</div>
<div class="t" style="left:408px;top:328.4px;font-size:12px;color:#484848;white-space:pre"> • когда данные упорядочены</div>
<div class="t" style="left:408px;top:343.4px;font-size:12px;color:#484848;white-space:pre">иерархически и делятся на</div>
<div class="t" style="left:408px;top:358.3px;font-size:12px;color:#484848;white-space:pre">небольшое количество</div>
<div class="t" style="left:408px;top:373.2px;font-size:12px;color:#484848;white-space:pre">категорий.</div>
<svg class="a" style="left:0;top:0" width="891" height="849" viewBox="0 0 891 849"><defs><filter id="sh" x="-20%" y="-20%" width="140%" height="140%"><feGaussianBlur in="SourceAlpha" stdDeviation="2.2"/><feOffset dx="1.5" dy="2.5" result="b"/><feComponentTransfer><feFuncA type="linear" slope="0.45"/></feComponentTransfer><feMerge><feMergeNode/><feMergeNode in="SourceGraphic"/></feMerge></filter></defs><g filter="url(#sh)"><polygon points="142.6,145.4 328.7,87.1 331.5,96.1 355.2,73.0 322.6,67.5 325.4,76.6 139.4,135.0" fill="#fd4343"/><polygon points="179.7,249.8 334.4,160.9 339.5,169.7 357.7,141.2 323.9,142.6 328.9,151.4 174.3,240.2" fill="#fd4343"/></g><g filter="url(#sh)"><circle cx="141" cy="139" r="39" fill="#08ad8f"/><circle cx="177" cy="245" r="39" fill="#08ad8f"/></g></svg>
<svg class="a" style="left:0;top:0" width="200" height="200"><path d="M141 120H147.4V160.2H140.6V128.3C137.5 131.4 134 133.8 130.3 135.4V130.2C134.5 128.3 138.3 124.6 141 120Z" fill="#fff"/></svg>
<div class="t" style="left:137px;width:80px;text-align:center;top:218.3px;font-size:56px;color:#fff;-webkit-text-stroke:0.9px #fff">2</div>
<div class="a" style="left:868px;top:199px;width:21px;height:600px;background:#e6e6e6"></div>
<div class="a" style="left:872px;top:201px;width:15px;height:15px;background:#fff;border:1px solid #ababab"></div>
<svg class="a" style="left:876px;top:206px" width="8" height="5"><path d="M0 4.5h7.5L3.75 0z" fill="#666"/></svg>
<div class="a" style="left:872px;top:215px;width:15px;height:547px;background:#fff;border:1px solid #ababab"></div>
<div class="a" style="left:872px;top:762px;width:15px;height:23px;background:#dcdcdc"></div>
<div class="a" style="left:868px;top:218px;width:1px;height:581px;background:#a8a8a8"></div>
<div class="a" style="left:872px;top:785px;width:15px;height:14px;background:#fff;border:1px solid #c6c6c6"></div>
<svg class="a" style="left:875px;top:789px" width="9" height="6"><path d="M0 0h9L4.5 5z" fill="#555"/></svg>
<div class="a" style="left:1px;top:798px;width:889px;height:28px;background:#e6e6e6;border-top:1px solid #ababab"></div>
<div class="a" style="left:101px;top:799px;width:60px;height:24px;background:#fff;border-bottom:2px solid #217346"></div>
<div class="t" style="left:101px;width:60px;text-align:center;top:805px;font-size:12.5px;font-weight:bold;color:#217346">Лист1</div>
<div class="t" style="left:175px;top:805px;font-size:13px;color:#444">Лист3</div>
<div class="a" style="left:221px;top:803px;width:1px;height:17px;background:#999"></div>
<div class="t" style="left:234px;top:805px;font-size:13px;color:#444">Лист2</div>
<div class="a" style="left:280px;top:803px;width:1px;height:17px;background:#999"></div>
<svg class="a" style="left:314px;top:804px" width="17" height="17" viewBox="0 0 17 17"><circle cx="8.5" cy="8.5" r="7.3" fill="none" stroke="#555" stroke-width="1.3"/><path d="M8.5 4.5v8M4.5 8.5h8" stroke="#555" stroke-width="1.5"/></svg>
<div class="a" style="left:534px;top:806px;width:2px;height:2px;background:#999;box-shadow:0 4px 0 #999,0 8px 0 #999"></div>
<div class="a" style="left:552px;top:805px;width:14px;height:15px;background:#fff;border:1px solid #c6c6c6"></div>
<svg class="a" style="left:557px;top:808px" width="5" height="9"><path d="M5 0v9L0 4.5z" fill="#555"/></svg>
<div class="a" style="left:565px;top:805px;width:257px;height:15px;background:#fff;border:1px solid #c6c6c6"></div>
<div class="a" style="left:822px;top:805px;width:33px;height:15px;background:#dcdcdc"></div>
<div class="a" style="left:855px;top:805px;width:14px;height:15px;background:#fff;border:1px solid #c6c6c6"></div>
<svg class="a" style="left:860px;top:808px" width="5" height="9"><path d="M0 0v9L5 4.5z" fill="#555"/></svg>
<div class="a" style="left:1px;top:826px;width:889px;height:21px;background:#f1f1f1"></div>
<div class="a" style="left:1px;top:826px;width:889px;height:1px;background:#cfcfcf"></div>
<div class="t" style="left:8px;top:831px;font-size:12px;color:#444">Готово</div>
<div class="t" style="left:286px;top:831px;font-size:11px;color:#444">Среднее: 18,84</div>
<div class="t" style="left:415px;top:831px;font-size:11px;color:#444">Количество: 67</div>
<div class="t" style="left:512px;top:831px;font-size:11px;color:#444">Сумма: 942</div>
<div class="a" style="left:587px;top:826px;width:38px;height:21px;background:#c8c8c8"></div>
<svg class="a" style="left:598px;top:829px" width="95" height="15" viewBox="0 0 95 15"><g fill="none" stroke="#666" stroke-width="1.3"><rect x="1.5" y="1.5" width="12" height="12"/><path d="M5.5 1.5v12M9.5 1.5v12M1.5 5.5h12M1.5 9.5h12"/><rect x="39.5" y="1.5" width="13" height="12"/><rect x="42.5" y="4" width="7" height="7.5"/><path d="M44 6h4M44 8h4M44 10h4" stroke-width="1"/><path d="M77.5 1.5h13v12h-13z M81.5 1.5v6h4v-6"/></g></svg>
<div class="a" style="left:703px;top:835px;width:8px;height:2px;background:#555"></div>
<div class="a" style="left:716px;top:836px;width:100px;height:1px;background:#999"></div>
<div class="a" style="left:763px;top:830px;width:4px;height:13px;background:#555"></div>
<div class="a" style="left:819px;top:835px;width:10px;height:2px;background:#555"></div>
<div class="a" style="left:823px;top:831px;width:2px;height:10px;background:#555"></div>
<svg class="a" style="left:65px;top:829px" width="14" height="14" viewBox="0 0 14 14"><circle cx="3.5" cy="3.5" r="3" fill="#666"/><path d="M5 5.5h8.5v8H1.5V8" fill="none" stroke="#666" stroke-width="1"/><path d="M1.5 10.5h12M5 8h8.5M5 8v5.5M9 5.5v8" stroke="#666" stroke-width="1"/></svg>
<div class="t" style="left:844px;top:831px;font-size:11.5px;color:#444">100%</div>
<div class="a" style="left:0;top:0;width:1px;height:849px;background:#217346"></div>
<div class="a" style="left:890px;top:0;width:1px;height:849px;background:#146c3c"></div>
<div class="a" style="left:0;top:847.4px;width:891px;height:1.6px;background:#217346"></div>
<svg class="a" style="left:20px;top:768px;opacity:0.55" width="72" height="64" viewBox="0 0 72 64"><rect x="3" y="3" width="64" height="52" rx="7" fill="rgba(255,255,255,0.35)" stroke="#9a9a9a" stroke-width="1.2"/><rect x="7" y="7" width="56" height="44" rx="5" fill="none" stroke="#8a8a8a" stroke-width="3"/><path d="M14 13l19 19" stroke="#777" stroke-width="3.2" stroke-linecap="round"/><path d="M11 10l13 2-11 11z" fill="#777"/><path d="M22 58h22v4H22z" fill="none" stroke="#9a9a9a" stroke-width="1.2"/><path d="M15 37l-4 4 4 4M55 37l4 4-4 4" fill="none" stroke="#bbb" stroke-width="1.2"/></svg>
<svg class="a" style="left:0;top:760px" width="300" height="70" viewBox="0 760 300 70"><text x="96" y="809.5" font-family="Liberation Sans" font-weight="bold" font-size="34" textLength="53" lengthAdjust="spacingAndGlyphs" fill="rgba(255,170,190,0.75)" stroke="rgba(170,170,170,0.7)" stroke-width="1.3" paint-order="stroke">OS</text><text x="162" y="809.5" font-family="Liberation Sans" font-weight="bold" font-size="34" textLength="121" lengthAdjust="spacingAndGlyphs" fill="rgba(255,255,255,0.5)" stroke="rgba(150,150,150,0.65)" stroke-width="2" paint-order="stroke">Helper</text></svg></body></html>
